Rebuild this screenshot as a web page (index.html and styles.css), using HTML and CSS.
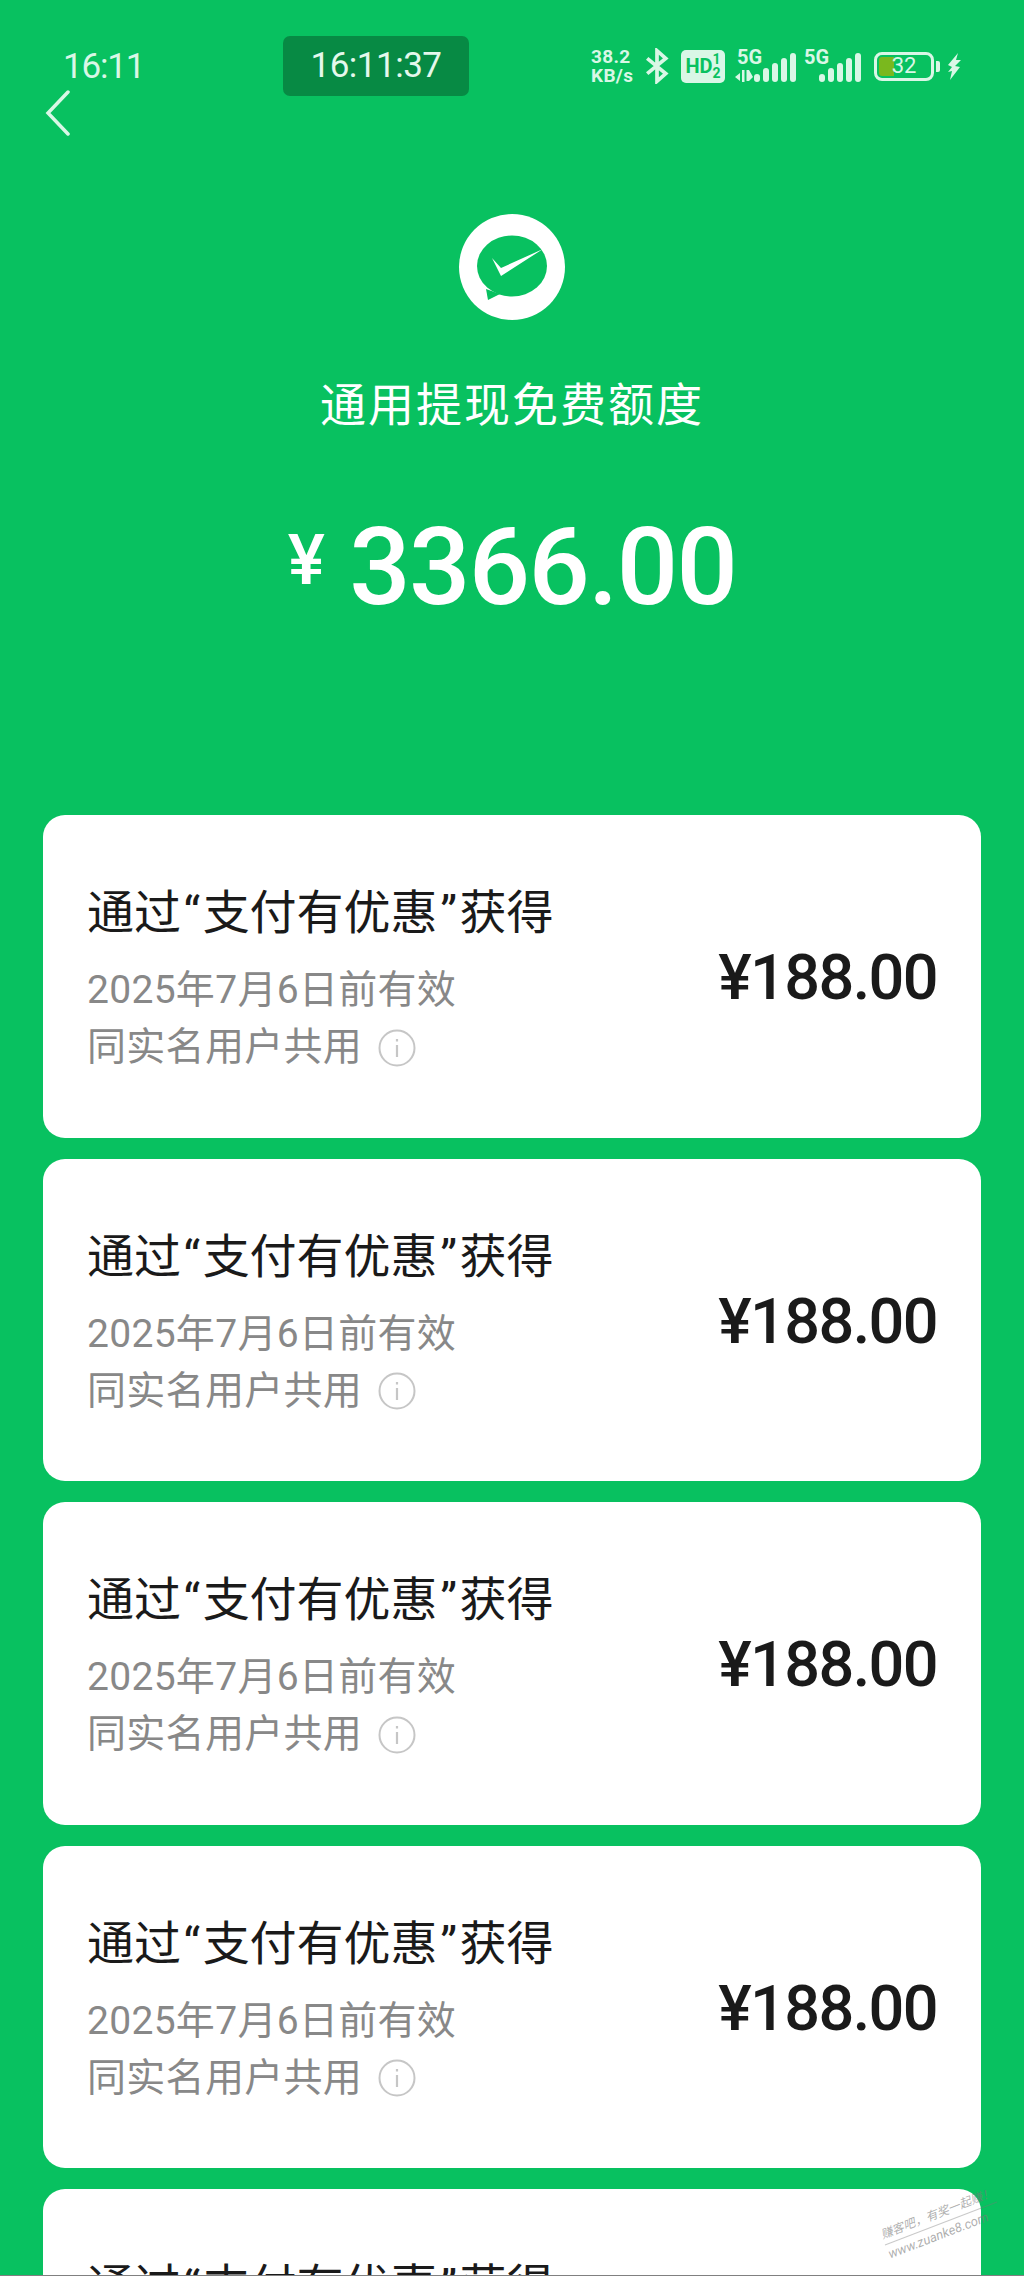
FILE: index.html
```html
<!DOCTYPE html>
<html lang="zh-CN">
<head>
    <meta charset="UTF-8">
    <meta name="viewport" content="width=device-width, initial-scale=1.0">
    <title>通用提现免费额度</title>
    <link rel="stylesheet" href="styles.css">
</head>
<body>

    <div class="status-bar">
        <span class="status-time">16:11</span>
        <span class="status-pill">16:11:37</span>
        <div class="status-icons">
            <div class="net-speed"><span>38.2</span><span>KB/s</span></div>
            <svg class="icon-bt" width="24" height="36" viewBox="0 0 22 32"><path d="M2 9l17 14-8 7V2l8 7L2 23" fill="none" stroke="#d9f7e6" stroke-width="3.4"/></svg>
            <div class="hd-badge"><span class="hd-text">HD</span><span class="hd-frac"><span>1</span><span>2</span></span></div>
            <div class="sim sim-one">
                <span class="sim-label">5G</span>
                <svg width="62" height="30" viewBox="0 0 62 30"><g fill="#d9f7e6"><path d="M0 25l5-4v8zM7 18h2.500v12H7zM11.500 18H14l4 7-4 4h-2.500z"/><rect x="19" y="22" width="6" height="8" rx="3"/><rect x="28" y="16" width="6" height="14" rx="3"/><rect x="37" y="11" width="6" height="19" rx="3"/><rect x="46" y="6" width="6" height="24" rx="3"/><rect x="55" y="1" width="6" height="29" rx="3"/></g></svg>
            </div>
            <div class="sim sim-two">
                <span class="sim-label">5G</span>
                <svg width="42" height="30" viewBox="0 0 42 30"><g fill="#d9f7e6"><rect x="0" y="22" width="6" height="8" rx="3"/><rect x="9" y="16" width="6" height="14" rx="3"/><rect x="18" y="11" width="6" height="19" rx="3"/><rect x="27" y="6" width="6" height="24" rx="3"/><rect x="36" y="1" width="6" height="29" rx="3"/></g></svg>
            </div>
            <div class="battery"><span class="battery-fill"></span><span class="battery-num">32</span></div>
            <span class="battery-nub"></span>
            <svg class="icon-bolt" width="16" height="27" viewBox="0 0 16 27"><path d="M11 0L1 12l4 2-4 5 4-1-2 9 10-13-5-1 6-6-5 0z" fill="#d9f7e6"/></svg>
        </div>
    </div>

    <svg class="back-icon" width="26" height="46" viewBox="0 0 26 46"><path d="M23 2L3 23l20 21" fill="none" stroke="#d9f7e6" stroke-width="3.5" stroke-linecap="round"/></svg>

    <header class="summary">
        <svg class="logo" width="106" height="106" viewBox="-53 -53 106 106">
            <circle r="53" fill="#fff"/>
            <ellipse cx="0" cy="-1" rx="35" ry="30.5" fill="#08c160"/>
            <path d="M-26 22L-24 33-12 27z" fill="#08c160"/>
            <path d="M-20 -9L-11 9 31 -18-11 1z" fill="#fff"/>
        </svg>
        <h1 class="summary-title">通用提现免费额度</h1>
        <div class="summary-amount"><span class="summary-yen">¥</span><span>3366.00</span></div>
    </header>

    <main class="card-list">
        <div class="card">
            <div class="card-info">
                <h2 class="card-title">通过<span class="quote">“</span>支付有优惠<span class="quote">”</span>获得</h2>
                <p class="card-line">2025年7月6日前有效</p>
                <p class="card-line">同实名用户共用<svg class="info-icon" width="38" height="38" viewBox="0 0 38 38"><circle cx="19" cy="19" r="17.5" fill="none" stroke="#c6c6c6" stroke-width="2"/><path d="M19 10v2.500M19 16v12" stroke="#c6c6c6" stroke-width="2.200"/></svg></p>
            </div>
            <div class="card-amount">¥188.00</div>
        </div>
        <div class="card">
            <div class="card-info">
                <h2 class="card-title">通过<span class="quote">“</span>支付有优惠<span class="quote">”</span>获得</h2>
                <p class="card-line">2025年7月6日前有效</p>
                <p class="card-line">同实名用户共用<svg class="info-icon" width="38" height="38" viewBox="0 0 38 38"><circle cx="19" cy="19" r="17.5" fill="none" stroke="#c6c6c6" stroke-width="2"/><path d="M19 10v2.500M19 16v12" stroke="#c6c6c6" stroke-width="2.200"/></svg></p>
            </div>
            <div class="card-amount">¥188.00</div>
        </div>
        <div class="card">
            <div class="card-info">
                <h2 class="card-title">通过<span class="quote">“</span>支付有优惠<span class="quote">”</span>获得</h2>
                <p class="card-line">2025年7月6日前有效</p>
                <p class="card-line">同实名用户共用<svg class="info-icon" width="38" height="38" viewBox="0 0 38 38"><circle cx="19" cy="19" r="17.5" fill="none" stroke="#c6c6c6" stroke-width="2"/><path d="M19 10v2.500M19 16v12" stroke="#c6c6c6" stroke-width="2.200"/></svg></p>
            </div>
            <div class="card-amount">¥188.00</div>
        </div>
        <div class="card">
            <div class="card-info">
                <h2 class="card-title">通过<span class="quote">“</span>支付有优惠<span class="quote">”</span>获得</h2>
                <p class="card-line">2025年7月6日前有效</p>
                <p class="card-line">同实名用户共用<svg class="info-icon" width="38" height="38" viewBox="0 0 38 38"><circle cx="19" cy="19" r="17.5" fill="none" stroke="#c6c6c6" stroke-width="2"/><path d="M19 10v2.500M19 16v12" stroke="#c6c6c6" stroke-width="2.200"/></svg></p>
            </div>
            <div class="card-amount">¥188.00</div>
        </div>
        <div class="card">
            <div class="card-info">
                <h2 class="card-title">通过<span class="quote">“</span>支付有优惠<span class="quote">”</span>获得</h2>
                <p class="card-line">2025年7月6日前有效</p>
                <p class="card-line">同实名用户共用<svg class="info-icon" width="38" height="38" viewBox="0 0 38 38"><circle cx="19" cy="19" r="17.5" fill="none" stroke="#c6c6c6" stroke-width="2"/><path d="M19 10v2.500M19 16v12" stroke="#c6c6c6" stroke-width="2.200"/></svg></p>
            </div>
            <div class="card-amount">¥188.00</div>
        </div>
    </main>

    <div class="watermark"><span class="watermark-top">赚客吧，有奖一起赚！</span><span>www.zuanke8.com</span></div>
    <div class="bottom-edge"></div>

</body>
</html>
```

FILE: styles.css
```css
html, body {
    height: 100%;
    overflow: hidden;
}
body {
    position: relative;
    margin: 0;
    background-color: #08c160;
    font-family: Roboto, "Noto Sans CJK SC", sans-serif;
    color: #1a1a1a;
}
.status-bar {
    display: flex;
    align-items: flex-start;
    height: 54px;
    padding: 36px 0 0 63px;
    color: #d9f7e6;
}
.status-time {
    width: 220px;
    font-size: 35px;
    line-height: 62px;
    letter-spacing: -1.2px;
}
.status-pill {
    width: 186px;
    height: 60px;
    border-radius: 7px;
    background-color: #078a44;
    text-align: center;
    font-size: 35px;
    line-height: 60px;
    letter-spacing: -0.5px;
    color: #e4f8ec;
}
.status-icons {
    display: flex;
    align-items: center;
    height: 60px;
    margin-left: 122px;
    color: #d9f7e6;
}
.net-speed {
    display: flex;
    flex-direction: column;
    width: 46px;
    font-size: 19px;
    font-weight: 700;
    line-height: 19px;
    letter-spacing: 0.3px;
}
.icon-bt {
    margin-left: 8px;
}
.hd-badge {
    display: flex;
    align-items: center;
    justify-content: center;
    width: 44px;
    height: 33px;
    margin-left: 12px;
    border-radius: 5px;
    background-color: #d9f7e6;
    color: #08c160;
    font-weight: 700;
}
.hd-text {
    font-size: 20px;
}
.hd-frac {
    display: flex;
    flex-direction: column;
    font-size: 14px;
    line-height: 14px;
}
.sim {
    position: relative;
    display: flex;
    align-items: flex-end;
    height: 32px;
}
.sim-one {
    margin-left: 10px;
}
.sim-two {
    margin-left: 5px;
}
.sim-two svg {
    margin-left: 17px;
}
.sim-label {
    position: absolute;
    top: -2px;
    left: 2px;
    font-size: 20px;
    font-weight: 700;
    line-height: 18px;
}
.battery {
    position: relative;
    display: flex;
    justify-content: center;
    align-items: center;
    box-sizing: border-box;
    width: 60px;
    height: 29px;
    margin-left: 13px;
    border: 3px solid #d9f7e6;
    border-radius: 8px;
}
.battery-fill {
    position: absolute;
    top: 2px;
    left: 2px;
    bottom: 2px;
    width: 15px;
    border-radius: 3px 0 0 3px;
    background-color: #7ab81e;
}
.battery-num {
    position: relative;
    font-size: 22px;
    line-height: 22px;
}
.battery-nub {
    width: 4px;
    height: 11px;
    margin-left: 2px;
    border-radius: 0 2px 2px 0;
    background-color: #d9f7e6;
}
.icon-bolt {
    margin-left: 7px;
}
.back-icon {
    display: block;
    margin: 0 0 0 45px;
}
.summary {
    display: flex;
    flex-direction: column;
    align-items: center;
    color: #fff;
}
.logo {
    margin-top: 78px;
}
.summary-title {
    margin: 52px 0 0;
    font-size: 46px;
    font-weight: 400;
    line-height: 66px;
    letter-spacing: 2px;
}
.summary-amount {
    display: flex;
    align-items: flex-start;
    margin-top: 71px;
    font-size: 108px;
    font-weight: 500;
    line-height: 116px;
    letter-spacing: -1.6px;
}
.summary-yen {
    margin-right: 26px;
    font-size: 70px;
    font-weight: 500;
    line-height: 102px;
}
.card-list {
    display: flex;
    flex-direction: column;
    gap: 21px;
    margin: 190px 43px 0;
}
.card {
    display: flex;
    flex: none;
    justify-content: space-between;
    align-items: center;
    box-sizing: border-box;
    height: 322.5px;
    padding: 4px 44px 0;
    border-radius: 22px;
    background-color: #fff;
}
.card-title {
    margin: 0 0 16px;
    font-size: 47px;
    font-weight: 400;
    line-height: 66px;
}
.quote {
    padding: 0 2.5px;
}
.card-line {
    display: flex;
    align-items: center;
    margin: 0;
    font-size: 39px;
    line-height: 57px;
    letter-spacing: 0.3px;
    color: #888;
}
.info-icon {
    margin-left: 16px;
}
.card-amount {
    font-size: 63px;
    font-weight: 500;
    line-height: 70px;
    letter-spacing: -1.6px;
}
.watermark {
    position: absolute;
    top: 2204px;
    left: 881px;
    display: flex;
    flex-direction: column;
    transform: rotate(-21deg);
    font-size: 13px;
    font-style: italic;
    line-height: 19px;
    white-space: nowrap;
    color: rgba(120, 120, 120, 0.6);
}
.watermark-top {
    border-bottom: 1px solid rgba(120, 120, 120, 0.4);
    font-size: 12px;
}
.bottom-edge {
    position: absolute;
    left: 0;
    right: 0;
    bottom: 0;
    height: 1px;
    background-color: #808080;
}
```
